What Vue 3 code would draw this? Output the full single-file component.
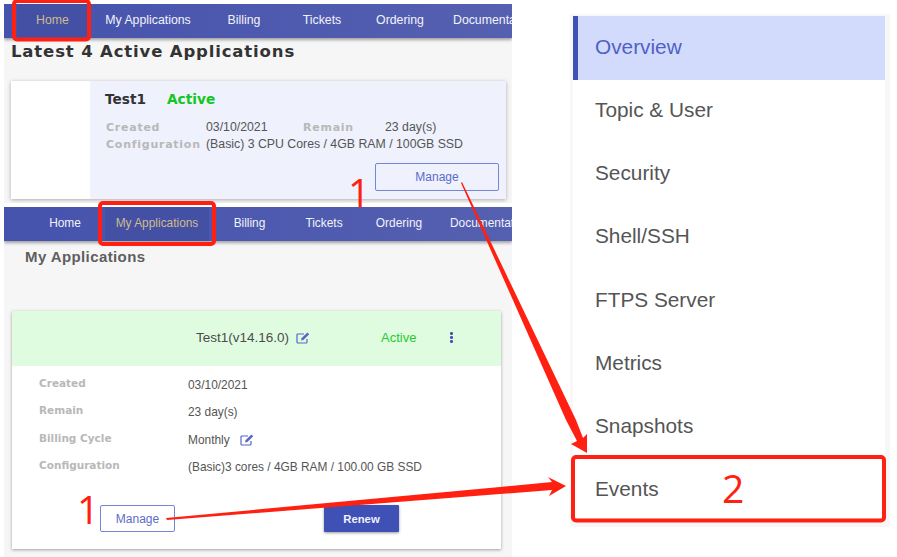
<script setup>
const navA = ['Home', 'My Applications', 'Billing', 'Tickets', 'Ordering', 'Documentation']
const menu = ['Overview', 'Topic & User', 'Security', 'Shell/SSH', 'FTPS Server', 'Metrics', 'Snapshots', 'Events']
const details = [
  { label: 'Created', value: '03/10/2021' },
  { label: 'Remain', value: '23 day(s)' },
  { label: 'Billing Cycle', value: 'Monthly', edit: true },
  { label: 'Configuration', value: '(Basic)3 cores / 4GB RAM / 100.00 GB SSD' },
]
</script>

<template>
  <div class="page">
    <div class="left">
      <section class="shot first">
        <nav class="nav nav-one">
          <a v-for="(n, i) in navA" :key="n" :class="{ on: i === 0 }">{{ n }}</a>
        </nav>
        <div class="body-one">
          <h1>Latest 4 Active Applications</h1>
          <article class="app-card">
            <div class="thumb"></div>
            <div class="info">
              <div class="title-row"><b>Test1</b><b class="active">Active</b></div>
              <div class="facts">
                <span class="lab">Created</span><span>03/10/2021</span><span class="lab">Remain</span><span>23 day(s)</span>
                <span class="lab">Configuration</span><span class="wide">(Basic) 3 CPU Cores / 4GB RAM / 100GB SSD</span>
              </div>
              <div class="manage-row"><button class="btn-line big">Manage</button></div>
            </div>
          </article>
        </div>
      </section>

      <section class="shot second">
        <nav class="nav nav-two">
          <a v-for="(n, i) in navA" :key="n" :class="{ on: i === 1 }">{{ n }}</a>
        </nav>
        <div class="body-two">
          <h2>My Applications</h2>
          <article class="detail-card">
            <header class="detail-head">
              <span class="name">Test1(v14.16.0)</span>
              <svg class="edit" viewBox="0 0 14 12" width="14" height="12"><path d="M11 7v3a1 1 0 0 1-1 1H2a1 1 0 0 1-1-1V3a1 1 0 0 1 1-1h6" fill="none" stroke="currentColor" stroke-width="1.2"/><path d="M5.500 6.200 11.400.6l1.800 1.700-5.800 5.600-2.300.5z" fill="currentColor"/></svg>
              <span class="status">Active</span>
              <span class="dots"><i></i><i></i><i></i></span>
            </header>
            <div class="detail-grid">
              <template v-for="d in details" :key="d.label">
                <span class="lab">{{ d.label }}</span>
                <span class="val">{{ d.value }}
                  <svg v-if="d.edit" class="edit after" viewBox="0 0 14 12" width="14" height="12"><path d="M11 7v3a1 1 0 0 1-1 1H2a1 1 0 0 1-1-1V3a1 1 0 0 1 1-1h6" fill="none" stroke="currentColor" stroke-width="1.2"/><path d="M5.500 6.200 11.400.6l1.800 1.700-5.800 5.600-2.300.5z" fill="currentColor"/></svg>
                </span>
              </template>
            </div>
            <div class="detail-actions">
              <button class="btn-line">Manage</button>
              <button class="btn-solid">Renew</button>
            </div>
          </article>
        </div>
      </section>
    </div>

    <aside class="panel">
      <ul>
        <li v-for="(m, i) in menu" :key="m" :class="{ current: i === 0 }">{{ m }}</li>
      </ul>
    </aside>

    <svg class="marks" viewBox="0 0 897 557" width="897" height="557" aria-hidden="true">
      <g fill="none" stroke="#ff2012" stroke-width="4">
        <rect x="14" y="1" width="75" height="38.500" rx="3"/>
        <rect x="100" y="203" width="114" height="41" rx="3"/>
        <rect x="573" y="457" width="311" height="63.500" rx="3"/>
      </g>
      <g fill="#ff2012">
        <path d="M461 183 566 420 577 441 571 444 587 453 587 434 583 438 576 420 462 182z"/>
        <path d="M166 518 500 487 552 482 548 477 566 486 549 496 552 490 500 494 167 520z"/>
      </g>
    </svg>
    <span class="mark-num n1">1</span>
    <span class="mark-num n2">1</span>
    <span class="mark-num n3">2</span>
  </div>
</template>

<style>
html, body { margin: 0; background: #fff; }
</style>

<style scoped>
.page {
  position: relative;
  width: 897px;
  height: 557px;
  overflow: hidden;
  background: #fff;
  font-family: "Liberation Sans", Arial, sans-serif;
  display: flex;
  color: #4a4a4a;
}
.left { width: 508px; margin-left: 4px; padding-top: 4px; }
.shot { background: #f6f6f6; overflow: hidden; }
.first { height: 199px; }
.second { margin-top: 4px; height: 350px; }
.nav {
  display: grid;
  height: 34px;
  align-items: stretch;
  background: linear-gradient(90deg, #4653ad, #5560b0);
  box-shadow: 0 2px 3px rgba(0, 0, 0, .35);
  font-size: 12.300px;
  color: #f2f3fa;
  overflow: hidden;
  white-space: nowrap;
  position: relative;
}
.nav a { display: flex; align-items: center; justify-content: center; padding-bottom: 2px; }
.nav a:last-child { justify-content: flex-start; }
.nav a.on { color: #cdbb8c; background: #4450a4; }
.nav-one { grid-template-columns: 84px 120px 72px 84px 72px 76px; }
.nav-one a:first-child { margin-left: 13px; }
.nav-one a:last-child { padding-left: 17px; }
.nav-two { font-size: 11.900px; grid-template-columns: 101px 104px 81px 68px 82px 72px; }
.nav-two a:first-child { padding-left: 21px; }
.nav-two a:last-child { padding-left: 10px; }

h1, h2 { margin: 0; }
h1 { font-family: "DejaVu Sans", sans-serif; font-size: 16.500px; line-height: 20px; color: #333; padding: 4px 0 0 7px; letter-spacing: .85px; }
h2 { font-family: "Liberation Sans", sans-serif; font-size: 15px; line-height: 20px; color: #5f5f5f; padding: 6px 0 0 21px; letter-spacing: .4px; }

.app-card {
  display: flex;
  margin: 19px 6px 0 7px;
  height: 118px;
  background: #fff;
  box-shadow: 0 1px 4px rgba(0, 0, 0, .3);
}
.thumb { width: 79px; background: #fff; }
.info { flex: 1; background: #eff1fd; padding: 10px 7px 0 15px; display: flex; flex-direction: column; }
.title-row { display: flex; gap: 21px; font-family: "DejaVu Sans", sans-serif; font-size: 13.700px; line-height: 16px; color: #333; }
.active { color: #12c71e; }
.facts {
  display: grid;
  grid-template-columns: 101px 96px 83px auto;
  margin-top: 12px;
  font-size: 12.300px;
  line-height: 17px;
  color: #555;
  white-space: nowrap;
}
.facts .lab { padding-left: 1px; }
.facts .wide { grid-column: 2 / 5; }
.lab { font-family: "DejaVu Sans", sans-serif; font-weight: 700; color: #b8b8b8; font-size: 10.500px; }
.facts .lab { font-size: 11px; letter-spacing: .75px; }
.manage-row { margin-top: auto; padding-bottom: 8px; display: flex; justify-content: flex-end; }

.btn-line {
  width: 75px;
  height: 27px;
  border: 1px solid #7486d8;
  border-radius: 2px;
  background: #fff;
  color: #5c6cc8;
  font: 12px "Liberation Sans", sans-serif;
  padding: 0;
}
.btn-line.big { width: 124px; height: 28px; background: transparent; }
.btn-solid {
  width: 75px;
  height: 27px;
  border: 0;
  border-radius: 1px;
  background: #3f51b5;
  color: #f1f2fa;
  font: 700 11.300px "Liberation Sans", sans-serif;
  box-shadow: 0 1px 3px rgba(0, 0, 0, .4);
  padding: 0;
}

.body-two { height: 100%; }
.detail-card {
  margin: 44px 11px 0 8px;
  height: 238px;
  background: #fff;
  box-shadow: 0 1px 3px rgba(0, 0, 0, .35);
}
.detail-head {
  height: 53px;
  padding-bottom: 2px;
  background: #dffce0;
  display: flex;
  align-items: center;
  font-size: 13.500px;
  padding-left: 184px;
}
.name { color: #4c4c4c; }
.edit { color: #5567c6; }
.detail-head .edit { margin-left: 7px; }
.status { margin-left: 71px; color: #27c931; font-size: 13px; }
.dots { margin-left: 34px; display: flex; flex-direction: column; gap: 1.500px; }
.dots i { width: 2.500px; height: 2.500px; border-radius: 50%; background: #3f51b5; }
.detail-grid {
  display: grid;
  grid-template-columns: 149px auto;
  grid-auto-rows: 27.300px;
  padding: 9px 0 0 27px;
  align-items: start;
}
.detail-grid .lab { line-height: 16px; }
.detail-grid .val { font-size: 11.900px; line-height: 20px; color: #555; display: flex; align-items: center; gap: 10px; }
.detail-actions { display: flex; gap: 149px; padding: 21px 0 0 88px; }

.panel {
  width: 320px;
  height: 513px;
  margin: 14px 0 0 58px;
  padding: 2px 5px 9px 3px;
  box-sizing: border-box;
  background: #f7f7f7;
}
.panel ul { list-style: none; margin: 0; padding: 0; background: #fff; height: 100%; }
.panel li {
  height: 63.200px;
  box-sizing: border-box;
  padding: 0 0 2px 22px;
  display: flex;
  align-items: center;
  font-size: 20.800px;
  color: #555;
}
.panel li.current { height: 63.500px; color: #4f62c4; background: #d3dbfd; box-shadow: inset 5px 0 0 #3f51b5; }

.marks { position: absolute; inset: 0; pointer-events: none; }
.mark-num {
  position: absolute;
  color: #ff2012;
  font-size: 39px;
  line-height: 39px;
  font-family: "Open Sans", sans-serif;
}
.n1 { left: 348px; top: 172px; }
.n2 { left: 77px; top: 489px; }
.n3 { left: 722px; top: 468px; }
</style>
